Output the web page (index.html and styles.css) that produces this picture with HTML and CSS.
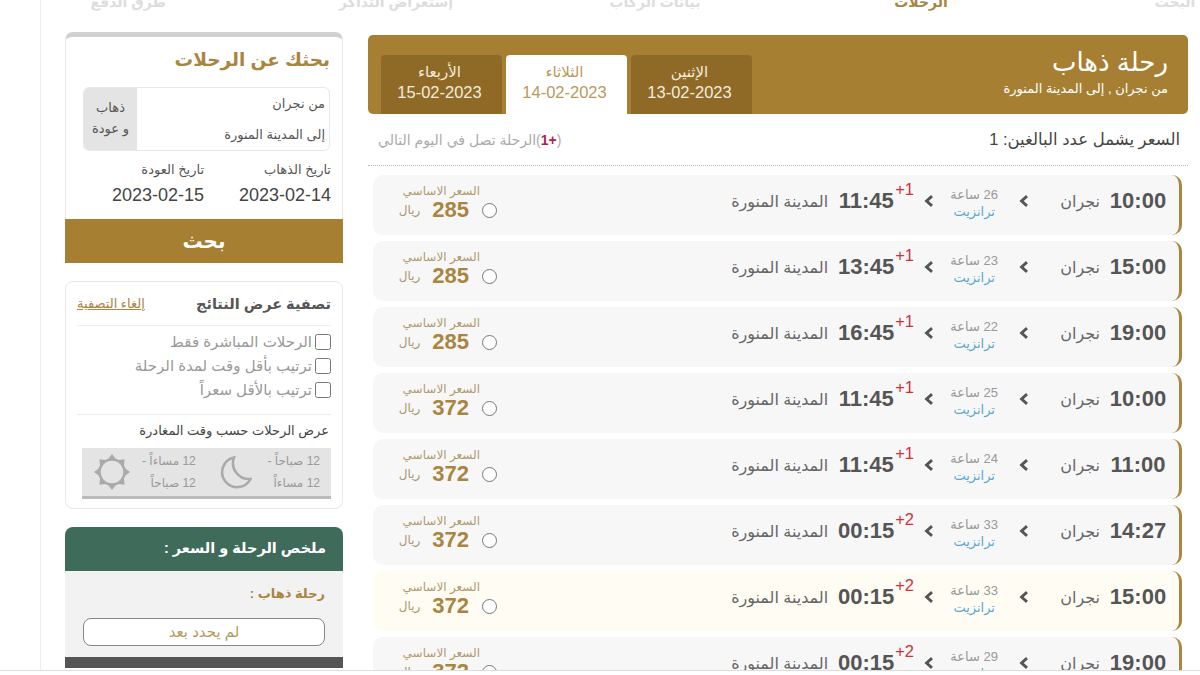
FILE: index.html
```html
<!DOCTYPE html>
<html lang="ar" dir="rtl">
<head>
    <meta charset="utf-8">
    <title>الرحلات</title>
    <link rel="stylesheet" href="styles.css">
</head>
<body>
    <div class="page">
        <nav class="steps">
            <span>البحث</span>
            <span class="current">الرحلات</span>
            <span>بيانات الركاب</span>
            <span>إستعراض التذاكر</span>
            <span>طرق الدفع</span>
        </nav>

        <div class="layout">
            <main class="results">
                <header class="trip-bar">
                    <div class="trip-title">
                        <h1>رحلة ذهاب</h1>
                        <p>من نجران , إلى المدينة المنورة</p>
                    </div>
                    <div class="tabs">
                        <a class="tab">الإثنين<br><b>13-02-2023</b></a>
                        <a class="tab active">الثلاثاء<br><b>14-02-2023</b></a>
                        <a class="tab">الأربعاء<br><b>15-02-2023</b></a>
                    </div>
                </header>

                <div class="note-line">
                    <span class="adults">السعر يشمل عدد البالغين: 1</span>
                    <span class="next-day">(<b>+1</b>)الرحلة تصل في اليوم التالي</span>
                </div>

                <div class="flight">
                    <span class="time">10:00</span><span class="city">نجران</span>
                    <svg class="arrow" viewBox="0 0 8 10"><path d="M6.500 1 L2 5 L6.500 9"/></svg>
                    <div class="duration">26 ساعة<br><em>ترانزيت</em></div>
                    <svg class="arrow short" viewBox="0 0 8 10"><path d="M6.500 1 L2 5 L6.500 9"/></svg>
                    <span class="plus">+1</span><span class="time">11:45</span><span class="city">المدينة المنورة</span>
                    <div class="price"><small>السعر الاساسي</small><div class="amount"><input type="radio" name="f"><strong>285</strong><i>ريال</i></div></div>
                </div>
                <div class="flight">
                    <span class="time">15:00</span><span class="city">نجران</span>
                    <svg class="arrow" viewBox="0 0 8 10"><path d="M6.500 1 L2 5 L6.500 9"/></svg>
                    <div class="duration">23 ساعة<br><em>ترانزيت</em></div>
                    <svg class="arrow short" viewBox="0 0 8 10"><path d="M6.500 1 L2 5 L6.500 9"/></svg>
                    <span class="plus">+1</span><span class="time">13:45</span><span class="city">المدينة المنورة</span>
                    <div class="price"><small>السعر الاساسي</small><div class="amount"><input type="radio" name="f"><strong>285</strong><i>ريال</i></div></div>
                </div>
                <div class="flight">
                    <span class="time">19:00</span><span class="city">نجران</span>
                    <svg class="arrow" viewBox="0 0 8 10"><path d="M6.500 1 L2 5 L6.500 9"/></svg>
                    <div class="duration">22 ساعة<br><em>ترانزيت</em></div>
                    <svg class="arrow short" viewBox="0 0 8 10"><path d="M6.500 1 L2 5 L6.500 9"/></svg>
                    <span class="plus">+1</span><span class="time">16:45</span><span class="city">المدينة المنورة</span>
                    <div class="price"><small>السعر الاساسي</small><div class="amount"><input type="radio" name="f"><strong>285</strong><i>ريال</i></div></div>
                </div>
                <div class="flight">
                    <span class="time">10:00</span><span class="city">نجران</span>
                    <svg class="arrow" viewBox="0 0 8 10"><path d="M6.500 1 L2 5 L6.500 9"/></svg>
                    <div class="duration">25 ساعة<br><em>ترانزيت</em></div>
                    <svg class="arrow short" viewBox="0 0 8 10"><path d="M6.500 1 L2 5 L6.500 9"/></svg>
                    <span class="plus">+1</span><span class="time">11:45</span><span class="city">المدينة المنورة</span>
                    <div class="price"><small>السعر الاساسي</small><div class="amount"><input type="radio" name="f"><strong>372</strong><i>ريال</i></div></div>
                </div>
                <div class="flight">
                    <span class="time">11:00</span><span class="city">نجران</span>
                    <svg class="arrow" viewBox="0 0 8 10"><path d="M6.500 1 L2 5 L6.500 9"/></svg>
                    <div class="duration">24 ساعة<br><em>ترانزيت</em></div>
                    <svg class="arrow short" viewBox="0 0 8 10"><path d="M6.500 1 L2 5 L6.500 9"/></svg>
                    <span class="plus">+1</span><span class="time">11:45</span><span class="city">المدينة المنورة</span>
                    <div class="price"><small>السعر الاساسي</small><div class="amount"><input type="radio" name="f"><strong>372</strong><i>ريال</i></div></div>
                </div>
                <div class="flight">
                    <span class="time">14:27</span><span class="city">نجران</span>
                    <svg class="arrow" viewBox="0 0 8 10"><path d="M6.500 1 L2 5 L6.500 9"/></svg>
                    <div class="duration">33 ساعة<br><em>ترانزيت</em></div>
                    <svg class="arrow short" viewBox="0 0 8 10"><path d="M6.500 1 L2 5 L6.500 9"/></svg>
                    <span class="plus">+2</span><span class="time">00:15</span><span class="city">المدينة المنورة</span>
                    <div class="price"><small>السعر الاساسي</small><div class="amount"><input type="radio" name="f"><strong>372</strong><i>ريال</i></div></div>
                </div>
                <div class="flight hover">
                    <span class="time">15:00</span><span class="city">نجران</span>
                    <svg class="arrow" viewBox="0 0 8 10"><path d="M6.500 1 L2 5 L6.500 9"/></svg>
                    <div class="duration">33 ساعة<br><em>ترانزيت</em></div>
                    <svg class="arrow short" viewBox="0 0 8 10"><path d="M6.500 1 L2 5 L6.500 9"/></svg>
                    <span class="plus">+2</span><span class="time">00:15</span><span class="city">المدينة المنورة</span>
                    <div class="price"><small>السعر الاساسي</small><div class="amount"><input type="radio" name="f"><strong>372</strong><i>ريال</i></div></div>
                </div>
                <div class="flight">
                    <span class="time">19:00</span><span class="city">نجران</span>
                    <svg class="arrow" viewBox="0 0 8 10"><path d="M6.500 1 L2 5 L6.500 9"/></svg>
                    <div class="duration">29 ساعة<br><em>ترانزيت</em></div>
                    <svg class="arrow short" viewBox="0 0 8 10"><path d="M6.500 1 L2 5 L6.500 9"/></svg>
                    <span class="plus">+2</span><span class="time">00:15</span><span class="city">المدينة المنورة</span>
                    <div class="price"><small>السعر الاساسي</small><div class="amount"><input type="radio" name="f"><strong>372</strong><i>ريال</i></div></div>
                </div>
            </main>

            <aside class="sidebar">
                <section class="search-card">
                    <h2>بحثك عن الرحلات</h2>
                    <div class="route">
                        <div class="route-places"><span>من نجران</span><span>إلى المدينة المنورة</span></div>
                        <div class="route-type">ذهاب<br>و عودة</div>
                    </div>
                    <div class="dates">
                        <div><label>تاريخ الذهاب</label><b>2023-02-14</b></div>
                        <div><label>تاريخ العودة</label><b>2023-02-15</b></div>
                    </div>
                    <button class="search-btn">بحث</button>
                </section>

                <section class="filter-card">
                    <div class="filter-head">
                        <h3>تصفية عرض النتائج</h3>
                        <a>إلغاء التصفية</a>
                    </div>
                    <div class="checks">
                        <label><input type="checkbox">الرحلات المباشرة فقط</label>
                        <label><input type="checkbox">ترتيب بأقل وقت لمدة الرحلة</label>
                        <label><input type="checkbox">ترتيب بالأقل سعراً</label>
                    </div>
                    <h4>عرض الرحلات حسب وقت المغادرة</h4>
                    <div class="daytimes">
                        <div class="daytime night">
                            <p>12 صباحاً -<br>12 مساءاً</p>
                            <svg width="33" height="33" viewBox="0 0 33 33"><path d="M15 1.500 A15 15 0 1 0 31.500 23 A16 16 0 0 1 15 1.500 Z" fill="none" stroke="#aaa" stroke-width="2.500"/></svg>
                        </div>
                        <div class="daytime">
                            <p>12 مساءاً -<br>12 صباحاً</p>
                            <svg width="38" height="38" viewBox="0 0 38 38">
                                <circle cx="19" cy="19" r="12.500" fill="none" stroke="#aaa" stroke-width="2.500"/>
                                <path fill="#aaa" d="M19 1l4.500 6h-9zM19 37l4.500-6h-9zM1 19l6-4.500v9zM37 19l-6-4.500v9zM6.300 6.300l7.500 1-6.500 6.500zM31.700 6.300l-7.500 1 6.500 6.500zM6.300 31.700l7.500-1-6.500-6.500zM31.700 31.700l-7.500-1 6.500-6.500z"/>
                            </svg>
                        </div>
                    </div>
                </section>

                <section class="summary-card">
                    <h3>ملخص الرحلة و السعر :</h3>
                    <div class="summary-body">
                        <h4>رحلة ذهاب :</h4>
                        <div class="pill">لم يحدد بعد</div>
                    </div>
                    <div class="summary-total"></div>
                </section>
            </aside>
        </div>

        <div class="page-end"></div>
    </div>
</body>
</html>
```

FILE: styles.css
```css
* {
    box-sizing: border-box;
}

body {
    margin: 0;
    background: #fff;
    font-family: "Liberation Sans", "DejaVu Sans", sans-serif;
    color: #555;
}

h1, h2, h3, h4, p {
    margin: 0;
}

.page {
    width: 1200px;
    height: 675px;
    overflow: hidden;
    background: linear-gradient(#eee, #eee) 40px 0 / 1px 100% no-repeat;
}

/* steps along the top, scrolled mostly out of view */
.steps {
    display: grid;
    grid-template-columns: 254px 254px 278px 240px 296px;
    width: 1322px;
    height: 18px;
    margin: -7px -102px 0 0;
    line-height: 18px;
    font-size: 14px;
    font-weight: bold;
    text-align: center;
    color: #ddd;
}

.steps .current {
    color: #a9853f;
}

.layout {
    display: flex;
    height: 659px;
    overflow: hidden;
    padding-right: 12px;
}

.results {
    flex: 0 0 820px;
    padding-top: 24px;
}

.trip-bar {
    display: flex;
    justify-content: space-between;
    align-items: flex-end;
    height: 79px;
    padding: 0 20px 0 13px;
    background: #a67f33;
    border-radius: 5px;
    color: #fff;
}

.trip-title {
    align-self: flex-start;
    padding-top: 12px;
}

.trip-title h1 {
    font-size: 26px;
    font-weight: normal;
    line-height: 30px;
}

.trip-title p {
    margin-top: 4px;
    font-size: 13px;
    line-height: 15px;
}

.tabs {
    display: flex;
    gap: 4px;
}

.tab {
    width: 121px;
    height: 59px;
    padding: 7px 4px 0 0;
    background: #8f6a26;
    border-radius: 4px 4px 0 0;
    text-align: center;
    font-size: 15px;
    line-height: 20px;
    color: #f3ecdc;
}

.tab b {
    font-size: 16.500px;
    font-weight: normal;
}

.tab.active {
    background: #fff;
    color: #b89a5e;
}

.note-line {
    display: flex;
    justify-content: space-between;
    align-items: center;
    height: 52px;
    margin-bottom: 9px;
    padding: 0 8px 0 10px;
    border-bottom: 1px dotted #bbb;
}

.adults {
    font-size: 16.500px;
    color: #444;
}

.next-day {
    font-size: 14px;
    color: #aaa;
}

.next-day b {
    color: #b3214a;
}

/* one flight row: the curved bar on the right is its border */
.flight {
    display: flex;
    align-items: center;
    height: 60px;
    margin: 6px 6px 0 5px;
    padding: 0 12px 8px 0;
    background: #f8f7f8;
    border-right: 3px solid #a9853f;
    border-radius: 10px;
}

.flight.hover {
    background: #fffdf3;
}

.time {
    width: 58px;
    font-size: 22px;
    font-weight: bold;
    color: #555;
    text-align: center;
}

.city {
    margin-right: 9px;
    font-size: 16px;
    color: #666;
    white-space: nowrap;
}

.arrow {
    flex: none;
    width: 16px;
    height: 12px;
    margin-right: 28px;
    fill: none;
    stroke: #555;
    stroke-width: 2.400;
}

.arrow.short {
    margin-right: 7px;
}

.duration {
    width: 60px;
    margin: 4px 12px 0 0;
    font-size: 13px;
    line-height: 17px;
    text-align: center;
    color: #999;
}

.duration em {
    font-style: normal;
    color: #5aa7d0;
}

.plus {
    width: 22px;
    align-self: flex-start;
    margin: 5px 4px 0 0;
    font-size: 16.500px;
    color: #d0323c;
    direction: ltr;
}

.price {
    width: 100px;
    margin: 4px auto 0 24px;
}

.price small {
    display: block;
    margin-right: 17px;
    font-size: 12px;
    line-height: 14px;
    color: #b09a6c;
}

.amount {
    display: flex;
    align-items: center;
}

.amount input {
    width: 15px;
    height: 15px;
    margin: 0 0 0 13px;
}

.amount strong {
    font-size: 22px;
    line-height: 24px;
    color: #a9853f;
}

.amount i {
    margin-right: 12px;
    font-size: 12px;
    font-style: normal;
    color: #a9956a;
}

.sidebar {
    flex: 0 0 278px;
    margin-right: 25px;
    padding-top: 21px;
}

.search-card {
    height: 231px;
    background: #fff;
    border: 1px solid #e8e8e8;
    border-top: 5px solid #d0d0d0;
    border-radius: 8px 8px 0 0;
    text-align: right;
}

.search-card h2 {
    padding: 9px 12px 0 0;
    font-size: 18.500px;
    line-height: 28px;
    color: #a9853f;
}

.route {
    display: flex;
    height: 64px;
    margin: 13px 12px 0 17px;
    border: 1px solid #e8e8e8;
    border-radius: 6px;
    overflow: hidden;
}

.route-places {
    flex: 1;
    display: flex;
    flex-direction: column;
    justify-content: space-around;
    padding: 0 4px;
    font-size: 13px;
    color: #555;
}

.route-type {
    width: 53px;
    padding-top: 9px;
    background: #e4e4e4;
    font-size: 13px;
    line-height: 21px;
    text-align: center;
}

.dates {
    display: grid;
    grid-template-columns: 127px 1fr;
    margin: 10px 11px 0 0;
}

.dates label {
    display: block;
    font-size: 13px;
    line-height: 18px;
}

.dates b {
    display: block;
    margin-top: 6px;
    font-size: 18px;
    font-weight: normal;
    line-height: 20px;
    color: #444;
}

.search-btn {
    display: block;
    width: calc(100% + 2px);
    height: 44px;
    margin: 14px -1px 0;
    border: none;
    background: #a67f33;
    color: #fff;
    font-family: inherit;
    font-size: 20px;
    font-weight: bold;
}

.filter-card {
    height: 228px;
    margin-top: 18px;
    padding: 0 11px;
    border: 1px solid #e8e8e8;
    border-radius: 8px;
}

.filter-head {
    display: flex;
    justify-content: space-between;
    align-items: center;
    height: 44px;
    border-bottom: 1px solid #eee;
}

.filter-head h3 {
    font-size: 14.500px;
    color: #555;
}

.filter-head a {
    font-size: 13px;
    color: #a9853f;
    text-decoration: underline;
}

.checks {
    padding: 4px 0 12px;
    border-bottom: 1px solid #eee;
}

.checks label {
    display: flex;
    align-items: center;
    height: 24px;
    font-size: 15px;
    color: #999;
}

.checks input {
    width: 16px;
    height: 16px;
    margin: 0 0 0 3px;
}

.filter-card h4 {
    padding-right: 2px;
    margin-top: 7px;
    font-size: 13px;
    line-height: 18px;
    font-weight: normal;
    color: #444;
}

.daytimes {
    display: flex;
    justify-content: space-between;
    height: 51px;
    margin: 8px 0 0 5px;
    padding: 0 11px;
    background: #e4e4e4;
    border-bottom: 3px solid #bbb;
}

.daytime {
    display: flex;
    align-items: center;
    gap: 11px;
}

.daytime.night {
    gap: 15px;
}

.daytime p {
    font-size: 12px;
    line-height: 22px;
    color: #999;
}

.summary-card {
    margin-top: 18px;
}

.summary-card h3 {
    height: 44px;
    padding-right: 17px;
    background: #3f6b5a;
    border-radius: 8px 8px 0 0;
    font-size: 14.500px;
    line-height: 43px;
    color: #fff;
}

.summary-body {
    height: 86px;
    padding: 13px 18px 0;
    background: #f2f2f2;
}

.summary-body h4 {
    font-size: 13px;
    line-height: 20px;
    color: #a9853f;
}

.pill {
    height: 28px;
    margin-top: 14px;
    background: #fff;
    border: 1px solid #888;
    border-radius: 8px;
    text-align: center;
    font-size: 15px;
    line-height: 25px;
    color: #b39a5a;
}

.summary-total {
    height: 11px;
    background: #555;
}

.page-end {
    height: 5px;
    border-top: 1px solid #ddd;
    background: #fff;
}
```
